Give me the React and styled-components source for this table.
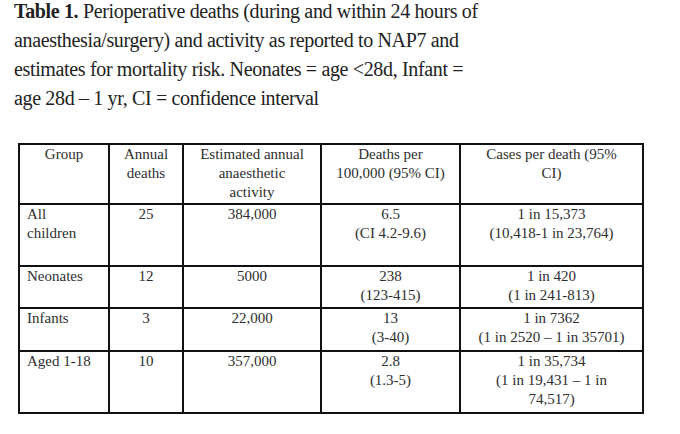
import React from "react";
import styled, { createGlobalStyle } from "styled-components";

const GlobalStyle = createGlobalStyle`
  html, body {
    margin: 0;
    padding: 0;
    background: #ffffff;
  }
  body {
    font-family: "Liberation Serif", "Times New Roman", serif;
    color: #262626;
  }
`;

const captionLines = [
  "Perioperative deaths (during and within 24 hours of",
  "anaesthesia/surgery) and activity as reported to NAP7 and",
  "estimates for mortality risk. Neonates = age <28d, Infant =",
  "age 28d – 1 yr, CI = confidence interval",
];

const rows = [
  {
    group: ["All", "children"],
    deaths: "25",
    activity: "384,000",
    rate: ["6.5", "(CI 4.2-9.6)"],
    cases: ["1 in 15,373", "(10,418-1 in 23,764)"],
    height: 62,
  },
  {
    group: ["Neonates"],
    deaths: "12",
    activity: "5000",
    rate: ["238", "(123-415)"],
    cases: ["1 in 420", "(1 in 241-813)"],
    height: 42,
  },
  {
    group: ["Infants"],
    deaths: "3",
    activity: "22,000",
    rate: ["13", "(3-40)"],
    cases: ["1 in 7362", "(1 in 2520 – 1 in 35701)"],
    height: 43,
  },
  {
    group: ["Aged 1-18"],
    deaths: "10",
    activity: "357,000",
    rate: ["2.8", "(1.3-5)"],
    cases: ["1 in 35,734", "(1 in 19,431 – 1 in", "74,517)"],
    height: 62,
  },
];

function Lines({ items }) {
  return items.map((line, i) => (
    <React.Fragment key={i}>
      {i > 0 && <br />}
      {line}
    </React.Fragment>
  ));
}

export default function App() {
  return (
    <Page>
      <GlobalStyle />
      <Caption>
        {captionLines.map((line, i) => (
          <CaptionLine key={i}>
            {i === 0 && <strong>Table 1. </strong>}
            {line}
          </CaptionLine>
        ))}
      </Caption>
      <DataTable>
        <colgroup>
          <col style={{ width: 90 }} />
          <col style={{ width: 74 }} />
          <col style={{ width: 138 }} />
          <col style={{ width: 139 }} />
          <col style={{ width: 183 }} />
        </colgroup>
        <thead>
          <Row $height={60}>
            <Cell>Group</Cell>
            <Cell>
              <Lines items={["Annual", "deaths"]} />
            </Cell>
            <Cell>
              <Lines items={["Estimated annual", "anaesthetic", "activity"]} />
            </Cell>
            <Cell>
              <Lines items={["Deaths per", "100,000 (95% CI)"]} />
            </Cell>
            <Cell>
              <Lines items={["Cases per death (95%", "CI)"]} />
            </Cell>
          </Row>
        </thead>
        <tbody>
          {rows.map((r) => (
            <Row key={r.group.join(" ")} $height={r.height}>
              <Cell $left>
                <Lines items={r.group} />
              </Cell>
              <Cell>{r.deaths}</Cell>
              <Cell>{r.activity}</Cell>
              <Cell>
                <Lines items={r.rate} />
              </Cell>
              <Cell>
                <Lines items={r.cases} />
              </Cell>
            </Row>
          ))}
        </tbody>
      </DataTable>
    </Page>
  );
}

const Page = styled.div`
  width: 680px;
  height: 434px;
  padding: 0 0 0 14px;
  box-sizing: border-box;
  overflow: hidden;
`;

const Caption = styled.div`
  margin: -3px 0 0;
  font-size: 20px;
  line-height: 29px;
  letter-spacing: -0.35px;
  color: #222222;
  strong {
    font-weight: bold;
  }
`;

const CaptionLine = styled.div`
  white-space: nowrap;
`;

const DataTable = styled.table`
  margin: 30px 0 0 4px;
  width: 624px;
  border-collapse: collapse;
  table-layout: fixed;
  font-size: 15px;
  line-height: 19px;
  color: #2e2e2e;
`;

const Row = styled.tr`
  height: ${(p) => p.$height}px;
`;

const Cell = styled.td`
  border: 2px solid #111111;
  vertical-align: top;
  padding: 0 7px;
  text-align: ${(p) => (p.$left ? "left" : "center")};
`;
